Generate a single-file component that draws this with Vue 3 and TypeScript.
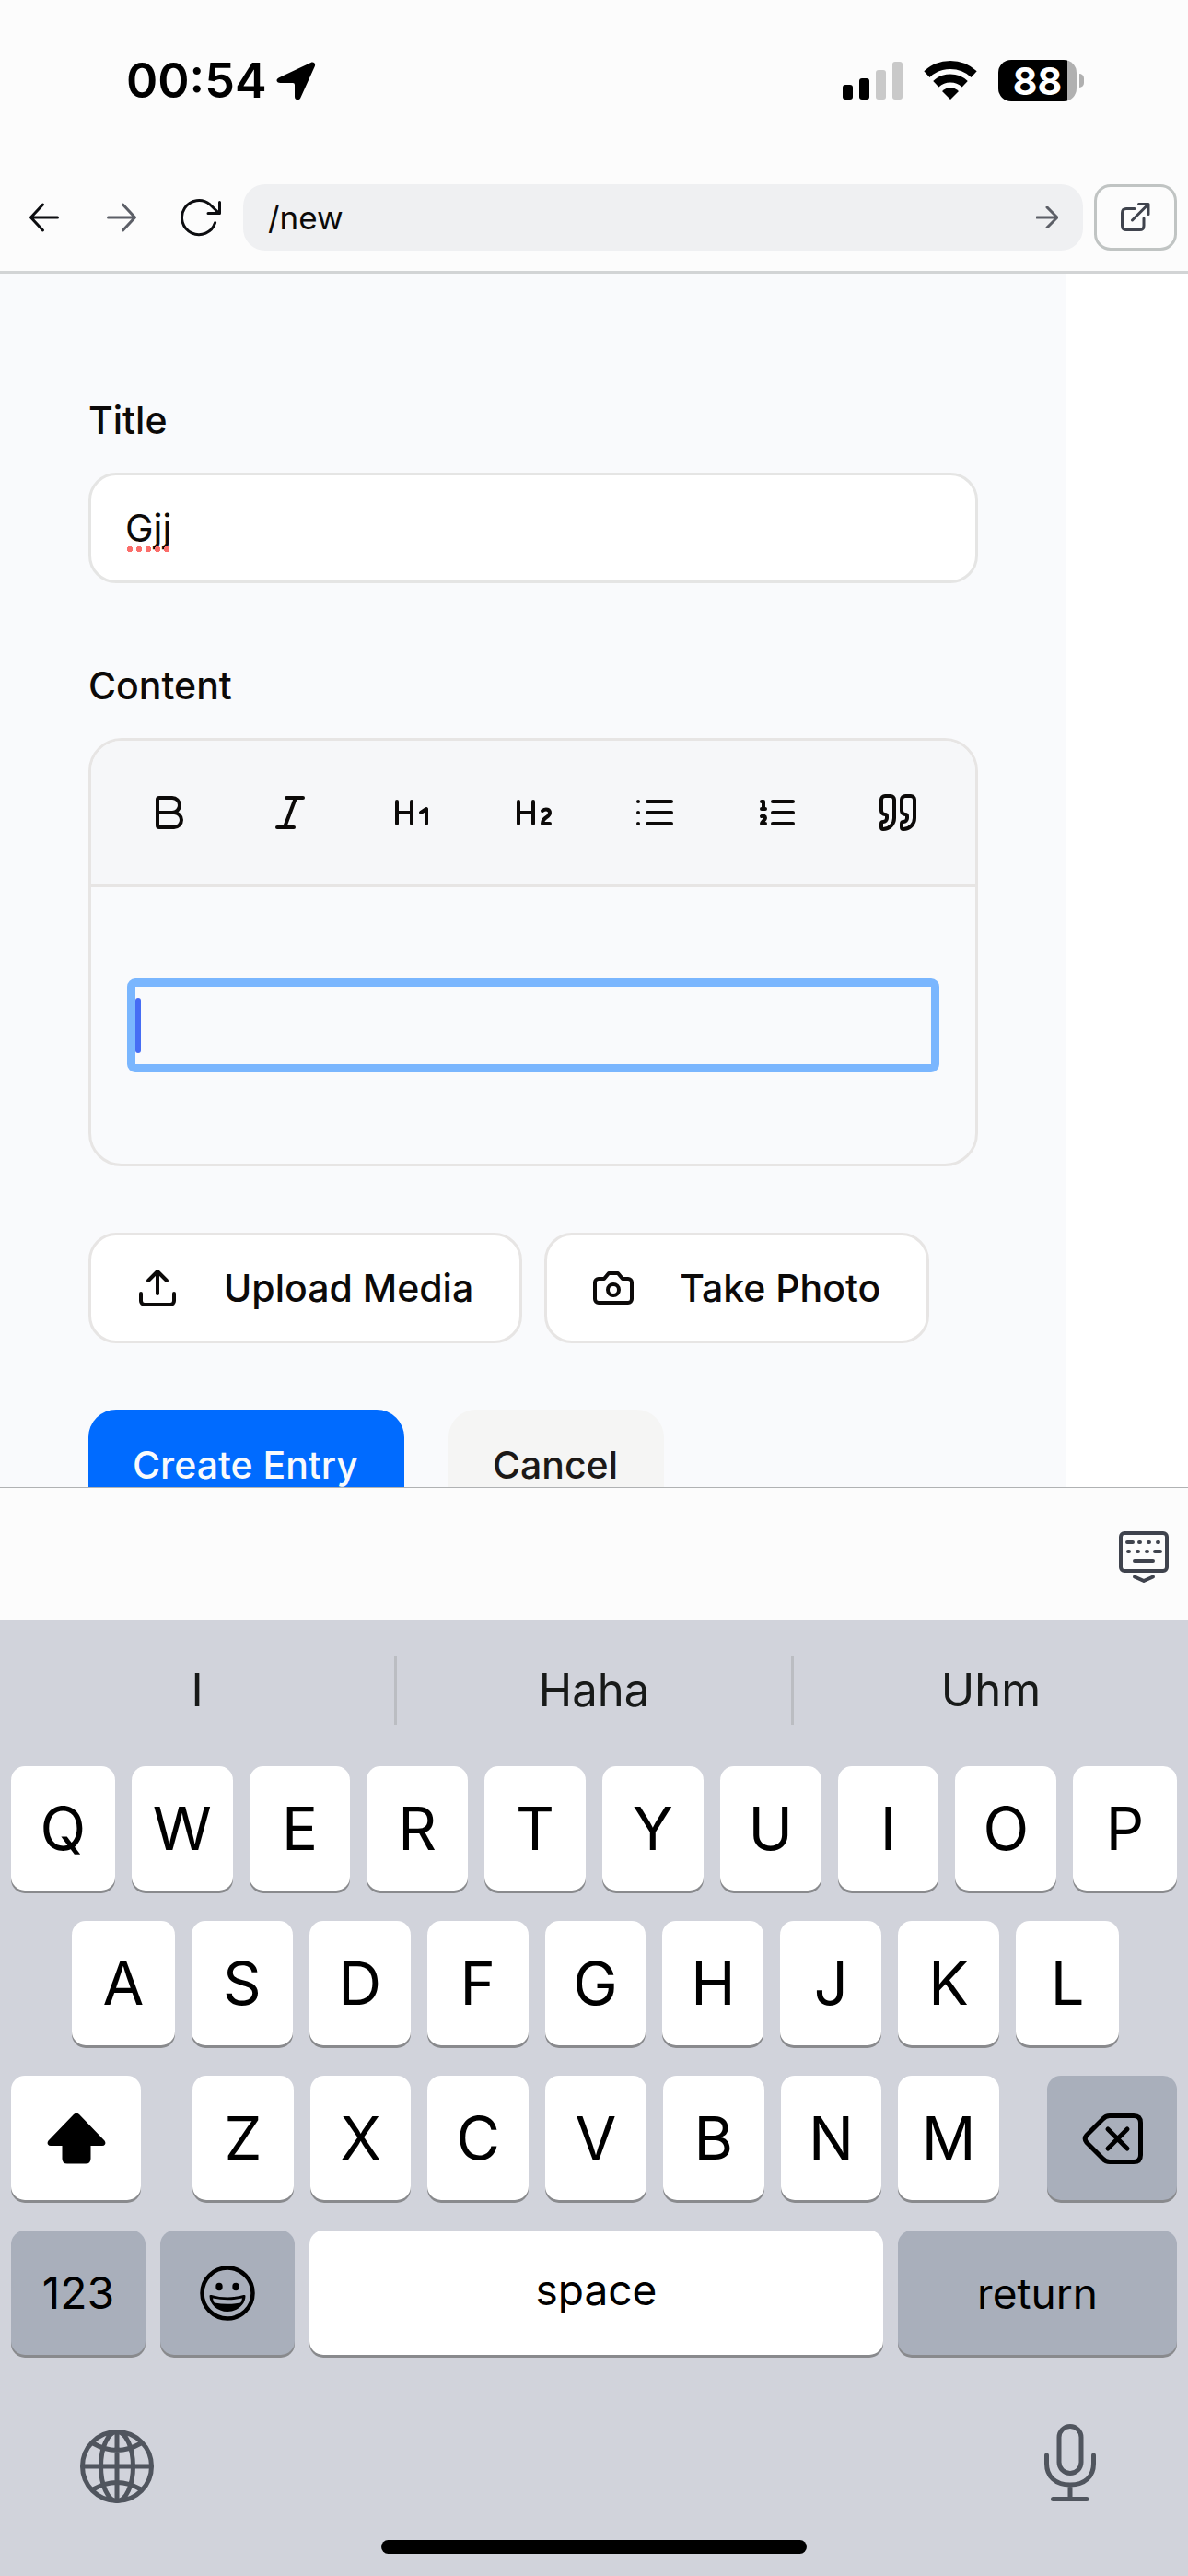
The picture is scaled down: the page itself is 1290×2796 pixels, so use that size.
<script setup lang="ts">
import { ref } from 'vue'

interface Tool {
  label: string
  paths: string[]
}

const path = ref('/new')
const title = ref('Gjj')

const tools: Tool[] = [
  { label: 'Bold', paths: ['M6 12h9a4 4 0 0 1 0 8H7a1 1 0 0 1-1-1V5a1 1 0 0 1 1-1h7a4 4 0 0 1 0 8'] },
  { label: 'Italic', paths: ['M19 4h-9', 'M14 20H5', 'M15 4 9 20'] },
  { label: 'Heading 1', paths: ['M4 12h8', 'M4 18V6', 'M12 18V6', 'm17 12 3-2v8'] },
  { label: 'Heading 2', paths: ['M4 12h8', 'M4 18V6', 'M12 18V6', 'M21 18h-4c0-4 4-3 4-6 0-1.5-2-2.5-4-1'] },
  { label: 'Bullet list', paths: ['M3 6h.01', 'M3 12h.01', 'M3 18h.01', 'M8 6h13', 'M8 12h13', 'M8 18h13'] },
  {
    label: 'Numbered list',
    paths: ['M10 6h11', 'M10 12h11', 'M10 18h11', 'M4 6h1v4', 'M4 10h2', 'M6 18H4c0-1 2-2 2-3s-1-1.5-2-1'],
  },
  {
    label: 'Quote',
    paths: [
      'M16 3a2 2 0 0 0-2 2v6a2 2 0 0 0 2 2 1 1 0 0 1 1 1v1a2 2 0 0 1-2 2 1 1 0 0 0-1 1v2a1 1 0 0 0 1 1 6 6 0 0 0 6-6V5a2 2 0 0 0-2-2z',
      'M5 3a2 2 0 0 0-2 2v6a2 2 0 0 0 2 2 1 1 0 0 1 1 1v1a2 2 0 0 1-2 2 1 1 0 0 0-1 1v2a1 1 0 0 0 1 1 6 6 0 0 0 6-6V5a2 2 0 0 0-2-2z',
    ],
  },
]

const suggestions = ['I', 'Haha', 'Uhm']
const topKeys = 'QWERTYUIOP'.split('')
const homeKeys = 'ASDFGHJKL'.split('')
const bottomKeys = 'ZXCVBNM'.split('')
</script>

<template>
  <div class="app">
    <header class="status">
      <div class="clock">
        <span>00:54</span>
        <svg width="43" height="42" viewBox="0 0 43 42" aria-hidden="true">
          <path
            d="M3 17.2 37.5 1C40.5 -.4 43 2 41.8 5L26.3 39.2C24.8 42.5 20 41.7 20 38V25Q20 23 18 23H4.5C0 23-1 19 3 17.2Z"
          />
        </svg>
      </div>
      <div class="indicators">
        <svg width="65" height="42" viewBox="0 0 65 42" aria-hidden="true">
          <rect x="0" y="25" width="11" height="16" rx="3" />
          <rect x="18" y="18" width="11" height="23" rx="3" />
          <rect class="dim" x="36" y="9" width="11" height="32" rx="3" />
          <rect class="dim" x="54" y="0" width="11" height="41" rx="3" />
        </svg>
        <svg width="58" height="43" viewBox="0 0 58 43" aria-hidden="true">
          <g fill="none" stroke="#000">
            <path stroke-width="9" d="M3.4 14.6A37.5 37.5 0 0 1 54.6 14.6" />
            <path stroke-width="9" d="M13.3 25.2A23 23 0 0 1 44.7 25.2" />
          </g>
          <path d="M29 42 20 33Q29 25 38 33Z" />
        </svg>
        <div class="battery">
          <div class="cell"><span>88</span></div>
          <i class="nub"></i>
        </div>
      </div>
    </header>

    <nav class="browser">
      <button class="nav" aria-label="Back">
        <svg width="48" height="48" viewBox="0 0 48 48"><path d="M38.5 24H10M22.5 10 9.5 24l13 14" /></svg>
      </button>
      <button class="nav muted" aria-label="Forward">
        <svg width="48" height="48" viewBox="0 0 48 48"><path d="M9.5 24H38M25.5 10l13 14-13 14" /></svg>
      </button>
      <button class="nav reload" aria-label="Reload">
        <svg width="48" height="48" viewBox="0 0 48 48">
          <path d="M41.6 29.7A18.5 18.5 0 1 1 36 10L45.5 19M46.5 7.5v12H34" />
        </svg>
      </button>
      <div class="address">
        <input v-model="path" aria-label="Address" />
        <button class="go" aria-label="Go">
          <svg width="24" height="24" viewBox="0 0 24 24"><path d="M1 12h21M12 1l11 11-11 11" /></svg>
        </button>
      </div>
      <button class="open" aria-label="Open in new window">
        <svg width="32" height="32" viewBox="0 0 32 32">
          <path d="M15 6.5H6Q1.5 6.5 1.5 11V25Q1.5 29.5 6 29.5H20.5Q25 29.5 25 25V17M12.5 19 29.5 2M19.5 1.5H30V12.5" />
        </svg>
      </button>
    </nav>

    <main>
      <form class="entry" @submit.prevent>
        <div class="field">
          <label for="title">Title</label>
          <div class="textbox">
            <input id="title" v-model="title" />
            <i class="spelling"></i>
          </div>
        </div>

        <div class="field">
          <label id="content-label">Content</label>
          <div class="editor">
            <div class="tools">
              <button v-for="tool in tools" :key="tool.label" type="button" :aria-label="tool.label">
                <svg class="icon" width="48" height="48" viewBox="0 0 24 24">
                  <path v-for="d in tool.paths" :key="d" :d="d" />
                </svg>
              </button>
            </div>
            <div class="body">
              <div class="writing" role="textbox" aria-labelledby="content-label" contenteditable="true">
                <span class="caret"></span>
              </div>
            </div>
          </div>
        </div>

        <div class="media">
          <button type="button" class="outlined">
            <svg class="icon" width="48" height="48" viewBox="0 0 24 24">
              <path d="M12 3v12" />
              <path d="m17 8-5-5-5 5" />
              <path d="M21 15v4a2 2 0 0 1-2 2H5a2 2 0 0 1-2-2v-4" />
            </svg>
            Upload Media
          </button>
          <button type="button" class="outlined">
            <svg class="icon" width="48" height="48" viewBox="0 0 24 24">
              <path d="M14.5 4h-5L7 7H4a2 2 0 0 0-2 2v9a2 2 0 0 0 2 2h16a2 2 0 0 0 2-2V9a2 2 0 0 0-2-2h-3l-2.5-3z" />
              <circle cx="12" cy="13" r="3" />
            </svg>
            Take Photo
          </button>
        </div>

        <div class="actions">
          <button type="submit" class="primary">Create Entry</button>
          <button type="button" class="secondary">Cancel</button>
        </div>
      </form>
    </main>

    <div class="accessory">
      <button aria-label="Hide keyboard">
        <svg width="54" height="58" viewBox="0 0 54 58">
          <rect x="2" y="2" width="50" height="41" rx="4" />
          <path d="M9 12h6M22 12h1M32 12h1M42 12h1M10 22h1M20 22h1M30 22h1M39 22h6M17 32h20M17 49.5l10 4.5 10-4.5" />
        </svg>
      </button>
    </div>

    <section class="keyboard" aria-label="Keyboard">
      <div class="suggestions">
        <button v-for="word in suggestions" :key="word">{{ word }}</button>
      </div>

      <div class="row top">
        <button v-for="k in topKeys" :key="k" class="key">{{ k }}</button>
      </div>
      <div class="row home">
        <button v-for="k in homeKeys" :key="k" class="key">{{ k }}</button>
      </div>
      <div class="row bottom">
        <button class="key side" aria-label="Shift">
          <svg width="64" height="56" viewBox="0 0 64 56">
            <path
              d="M29 2Q32-1 35 2L62.5 30.5Q64 32.5 63 34.5Q62 36 60 36H47.5V50Q47.5 55.5 42 55.5H22Q16.5 55.5 16.5 50V36H4Q2 36 1 34.5Q0 32.5 1.5 30.5Z"
            />
          </svg>
        </button>
        <div class="letters">
          <button v-for="k in bottomKeys" :key="k" class="key">{{ k }}</button>
        </div>
        <button class="key side dark" aria-label="Delete">
          <svg width="66" height="57" viewBox="-1 -2 66 57" class="line">
            <path
              d="M29 2.5H55Q62.5 2.5 62.5 10V45Q62.5 52.5 55 52.5H29Q24.5 52.5 21.5 49L4 31.5Q0.5 27.5 4 23.5L21.5 6Q24.5 2.5 29 2.5Z"
            />
            <path d="M27 17 48 38M48 17 27 38" />
          </svg>
        </button>
      </div>
      <div class="row space-row">
        <button class="key numeric dark small">123</button>
        <button class="key small dark" aria-label="Emoji">
          <svg width="60" height="60" viewBox="0 0 60 60">
            <circle cx="30" cy="30" r="27.5" fill="none" stroke="#000" stroke-width="4.5" />
            <ellipse cx="21" cy="23" rx="3.7" ry="4.2" />
            <ellipse cx="39" cy="23" rx="3.7" ry="4.2" />
            <path d="M10.5 33Q10.5 31.5 12.5 32Q30 37 47.5 32Q49.5 31.5 49.5 33C49.5 42 41 50 30 50S10.5 42 10.5 33Z" />
            <path class="teeth" d="M14 35.5Q30 39 46 35.5Q45.5 39 44 40.5Q30 43 16 40.5Q14.5 39 14 35.5Z" />
          </svg>
        </button>
        <button class="key word space">space</button>
        <button class="key word dark return">return</button>
      </div>

      <div class="dock">
        <button aria-label="Next keyboard">
          <svg width="80" height="80" viewBox="0 0 80 80" class="line">
            <circle cx="40" cy="40" r="37.5" />
            <ellipse cx="40" cy="40" rx="17.5" ry="37.5" />
            <path d="M40 3v74M3 40h74M14 15Q40 30 66 15M14 65Q40 50 66 65" />
          </svg>
        </button>
        <button aria-label="Dictate">
          <svg width="56" height="86" viewBox="0 0 56 86" class="line">
            <rect x="16" y="2.5" width="24" height="51" rx="12" />
            <path d="M2.5 34V43C2.5 57 12 66 28 66S53.500 57 53.500 43V34M28 66V81M9.5 81.5H46" />
          </svg>
        </button>
      </div>
      <div class="indicator"></div>
    </section>
  </div>
</template>

<style>
body {
  margin: 0;
}
</style>

<style scoped>
.app {
  display: flex;
  flex-direction: column;
  height: 100vh;
  overflow: hidden;
  background: #fcfcfc;
  color: #0c0a09;
  font-family: Inter, 'Liberation Sans', sans-serif;
}

.app * {
  box-sizing: border-box;
}

button,
input {
  margin: 0;
  padding: 0;
  border: 0;
  background: none;
  color: inherit;
  font: inherit;
  outline: none;
}

svg {
  display: block;
  flex: none;
}

.status {
  display: flex;
  flex: none;
  align-items: center;
  justify-content: space-between;
  height: 177px;
  padding: 0 113px 2px 137px;
  color: #000;
}

.clock {
  display: flex;
  align-items: center;
  gap: 10px;
  font-size: 52px;
  font-weight: 600;
}

.indicators {
  display: flex;
  align-items: center;
  gap: 23px;
}

.dim {
  fill: #c9c9c9;
}

.battery {
  display: flex;
  align-items: center;
  gap: 3px;
}

.cell {
  display: flex;
  align-items: center;
  justify-content: center;
  width: 85px;
  height: 45px;
  border-radius: 14px;
  background: linear-gradient(90deg, #000 75px, #b0b0b0 75px);
  color: #fff;
  font-size: 41px;
  font-weight: 700;
}

.nub {
  width: 5px;
  height: 15px;
  border-radius: 0 5px 5px 0;
  background: #b0b0b0;
}

.browser {
  display: flex;
  flex: none;
  align-items: center;
  padding: 23px 12px 22px 6px;
  border-bottom: 3px solid #d2d4d5;
}

.nav {
  display: flex;
  align-items: center;
  justify-content: center;
  width: 84px;
  height: 72px;
}

.reload {
  width: 90px;
  padding-right: 6px;
}

.nav svg,
.go svg,
.open svg {
  fill: none;
  stroke: #0c0d10;
  stroke-width: 3;
  stroke-linecap: round;
  stroke-linejoin: round;
}

.nav.muted svg,
.go svg {
  stroke: #5c5f67;
}

.address {
  display: flex;
  flex: 1;
  align-items: center;
  height: 72px;
  padding: 0 27px;
  border-radius: 24px;
  background: #eff0f2;
}

.address input {
  flex: 1;
  min-width: 0;
  font-size: 35px;
}

.open {
  display: flex;
  align-items: center;
  justify-content: center;
  width: 90px;
  height: 72px;
  margin-left: 12px;
  border: 3px solid #c0c4c3;
  border-radius: 18px;
}

.open svg {
  stroke: #3f434d;
}

main {
  flex: 1;
  min-height: 0;
  overflow: hidden;
  background: #fff;
}

.entry {
  min-height: 100%;
  margin-right: 132px;
  padding: 138px 96px 96px;
  background: #f9fafc;
  font-size: 41px;
  font-weight: 500;
  line-height: 42px;
}

.field + .field {
  margin-top: 90px;
}

label {
  display: block;
  margin-bottom: 36px;
}

.textbox {
  position: relative;
}

.textbox input {
  display: block;
  width: 100%;
  height: 120px;
  padding: 0 37px;
  border: 3px solid #e5e5e4;
  border-radius: 30px;
  background: #fff;
  font-weight: 400;
}

.spelling {
  position: absolute;
  left: 42px;
  top: 80px;
  width: 48px;
  height: 6px;
  background: radial-gradient(circle at 3px 3px, #fb6e6a 3px, transparent 3px) 0 0 / 10px 6px;
}

.editor {
  border: 3px solid #e7e5e4;
  border-radius: 36px;
  overflow: hidden;
}

.tools {
  display: flex;
  gap: 12px;
  padding: 24px;
  border-bottom: 3px solid #e7e5e4;
  background: #f6f7f9;
}

.tools button {
  display: flex;
  flex: 1;
  align-items: center;
  justify-content: center;
  height: 108px;
}

.icon {
  fill: none;
  stroke: currentColor;
  stroke-width: 2;
  stroke-linecap: round;
  stroke-linejoin: round;
}

.body {
  padding: 99px 39px;
}

.writing {
  display: flex;
  padding: 12px 0;
  border: 9px solid #7ab6fe;
  border-radius: 9px;
  outline: none;
}

.caret {
  width: 6px;
  height: 60px;
  border-radius: 3px;
  background: #466df4;
}

.media,
.actions {
  display: flex;
  margin-top: 72px;
}

.media {
  gap: 24px;
}

.actions {
  gap: 48px;
}

.outlined {
  display: flex;
  align-items: center;
  gap: 48px;
  height: 120px;
  padding: 0 50px 0 48px;
  border: 3px solid #e7e5e4;
  border-radius: 30px;
  background: #fff;
}

.primary,
.secondary {
  height: 120px;
  padding: 0 50px 0 48px;
  border-radius: 30px;
}

.primary {
  background: #006bff;
  color: #f8fafc;
}

.secondary {
  background: #f5f5f4;
  color: #1c1917;
}

.accessory {
  display: flex;
  flex: none;
  align-items: center;
  justify-content: flex-end;
  height: 144px;
  padding: 8px 21px 0;
  border-top: 1px solid #b0b2b3;
}

.accessory svg {
  fill: none;
  stroke: #3f434d;
  stroke-width: 4;
  stroke-linecap: round;
  stroke-linejoin: round;
}

.keyboard {
  flex: none;
  padding: 0 12px 24px;
  background: #d1d3db;
  color: #000;
}

.suggestions {
  display: flex;
  align-items: center;
  height: 153px;
  margin: 0 -12px 6px;
  color: #181a19;
  font-size: 49px;
}

.suggestions button {
  flex: 1;
  height: 75px;
}

.suggestions button:not(:last-child) {
  border-right: 3px solid #bbbdc2;
}

.row {
  display: flex;
  margin-bottom: 33px;
}

.top,
.home {
  display: grid;
  gap: 18px;
}

.top {
  grid-template-columns: 113fr repeat(8, 110fr) 113fr;
}

.home {
  grid-template-columns: 112fr repeat(7, 110fr) 112fr;
  padding: 0 63px 0 66px;
}

.key {
  display: flex;
  align-items: center;
  justify-content: center;
  min-width: 0;
  height: 135px;
  border-radius: 15px;
  background: #fff;
  box-shadow: 0 3px 0 #898a8d;
  font-size: 65px;
}

.dark {
  background: #a9afbb;
}

.side {
  width: 141px;
}

.letters {
  display: flex;
  flex: 1;
  gap: 18px;
  margin: 0 52px 0 56px;
}

.letters .key {
  flex: 1;
}

.space-row {
  gap: 16px;
  margin-bottom: 75px;
}

.small {
  width: 146px;
}

.numeric {
  font-size: 48px;
}

.word {
  font-size: 46px;
}

.space {
  flex: 1;
  padding-bottom: 8px;
}

.return {
  width: 303px;
}

.teeth {
  fill: #a9afbb;
}

.line {
  fill: none;
  stroke: #000;
  stroke-width: 5;
  stroke-linecap: round;
  stroke-linejoin: round;
}

.dock {
  display: flex;
  align-items: flex-end;
  justify-content: space-between;
  padding: 0 88px 0 75px;
}

.dock .line {
  stroke: #50555e;
}

.indicator {
  width: 462px;
  height: 15px;
  margin: 40px auto 0;
  border-radius: 8px;
  background: #000;
}
</style>
